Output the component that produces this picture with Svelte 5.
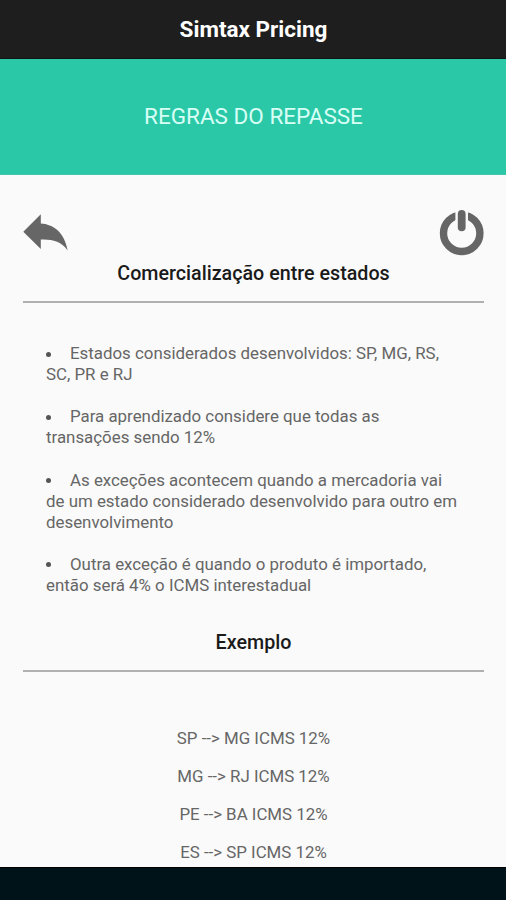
<script lang="ts">
  // Rules are already broken into the lines shown on screen
  const rules: string[][] = [
    ['Estados considerados desenvolvidos: SP, MG, RS,', 'SC, PR e RJ'],
    ['Para aprendizado considere que todas as', 'transações sendo 12%'],
    [
      'As exceções acontecem quando a mercadoria vai',
      'de um estado considerado desenvolvido para outro em',
      'desenvolvimento'
    ],
    ['Outra exceção é quando o produto é importado,', 'então será 4% o ICMS interestadual']
  ];

  const examples = [
    { from: 'SP', to: 'MG', rate: 12 },
    { from: 'MG', to: 'RJ', rate: 12 },
    { from: 'PE', to: 'BA', rate: 12 },
    { from: 'ES', to: 'SP', rate: 12 }
  ];
</script>

<div class="screen">
  <header class="app-bar">
    <h1>Simtax Pricing</h1>
  </header>

  <div class="banner"><span>REGRAS DO REPASSE</span></div>

  <main class="content">
    <nav class="actions">
      <button type="button" aria-label="Voltar">
        <svg width="46" height="46" viewBox="0 0 46 46">
          <path d="M0.3 21.8 L17.8 4.3 V13.6 C30 14.2 41.5 22.2 44.6 40.5 C38.5 31.2 28 29 17.8 29.6 V39 Z" fill="#666" />
        </svg>
      </button>
      <button type="button" aria-label="Sair">
        <svg width="46" height="46" viewBox="0 0 46 46">
          <circle cx="23.7" cy="23.3" r="18.2" fill="none" stroke="#666" stroke-width="7.4" />
          <!-- gap around the power bar -->
          <rect x="17.4" y="0" width="12.6" height="12" fill="#fafafa" />
          <path d="M23.7 3.9 V17.3" fill="none" stroke="#666" stroke-width="7.8" stroke-linecap="round" />
        </svg>
      </button>
    </nav>

    <h2>Comercialização entre estados</h2>
    <hr />

    <ul class="rules">
      {#each rules as lines}
        <li>
          {#each lines as line, i}
            <div class="line">
              {#if i === 0}<span class="dot"></span>{/if}<span>{line}</span>
            </div>
          {/each}
        </li>
      {/each}
    </ul>

    <h2>Exemplo</h2>
    <hr />

    <div class="examples">
      {#each examples as ex}
        <p>{ex.from} --&gt; {ex.to} ICMS {ex.rate}%</p>
      {/each}
    </div>
  </main>

  <footer class="system-bar"></footer>
</div>

<style>
  :global(body) {
    margin: 0;
  }

  .screen {
    display: flex;
    flex-direction: column;
    width: 506px;
    height: 900px;
    overflow: hidden;
    background-color: #fafafa;
    font-family: Roboto, sans-serif;
    color: #666;
  }

  .app-bar {
    display: flex;
    flex: none;
    align-items: center;
    justify-content: center;
    box-sizing: border-box;
    height: 59px;
    padding-left: 1px;
    border-bottom: 1px solid #101514;
    background-color: #1e1e1e;
  }

  h1 {
    margin: 0;
    font-size: 22.5px;
    font-weight: 700;
    color: #fff;
  }

  .banner {
    display: flex;
    flex: none;
    align-items: center;
    justify-content: center;
    box-sizing: border-box;
    height: 116px;
    padding: 0 0 1px 1px;
    border-bottom: 1px solid #3fc5a9;
    background-color: #2bc8a8;
    font-size: 22.5px;
    color: #d8fff5;
  }

  .content {
    flex: 1;
    min-height: 0;
    overflow: hidden;
    padding: 35px 22px 0 23px;
  }

  .actions {
    display: flex;
    justify-content: space-between;
    height: 46px;
  }

  .actions button {
    width: 46px;
    height: 46px;
    padding: 0;
    border: none;
    background: none;
  }

  .actions svg {
    display: block;
  }

  h2 {
    margin: 0;
    font-size: 19.7px;
    font-weight: 500;
    line-height: 24px;
    text-align: center;
    color: #1a1a1a;
  }

  .actions + h2 {
    margin-top: 6px;
  }

  hr {
    height: 2px;
    margin: 15px 0 0;
    border: none;
    background-color: #b0b0b0;
  }

  .rules {
    display: flex;
    flex-direction: column;
    gap: 21.1px;
    margin: 39.5px 0 35.5px;
    padding: 0 0 0 23px;
    list-style: none;
  }

  .line {
    display: flex;
    align-items: center;
    height: 21.1px;
    font-size: 16.88px;
    white-space: nowrap;
  }

  .dot {
    flex: none;
    width: 5px;
    height: 5px;
    margin: 2px 19px 0 0;
    border-radius: 50%;
    background-color: #555;
  }

  .examples {
    display: flex;
    flex-direction: column;
    gap: 17px;
    margin-top: 56px;
    text-align: center;
  }

  .examples p {
    margin: 0;
    font-size: 16.88px;
    line-height: 21px;
  }

  .system-bar {
    flex: none;
    box-sizing: border-box;
    height: 33px;
    border-top: 1px solid #000;
    background-color: #001318;
  }
</style>
